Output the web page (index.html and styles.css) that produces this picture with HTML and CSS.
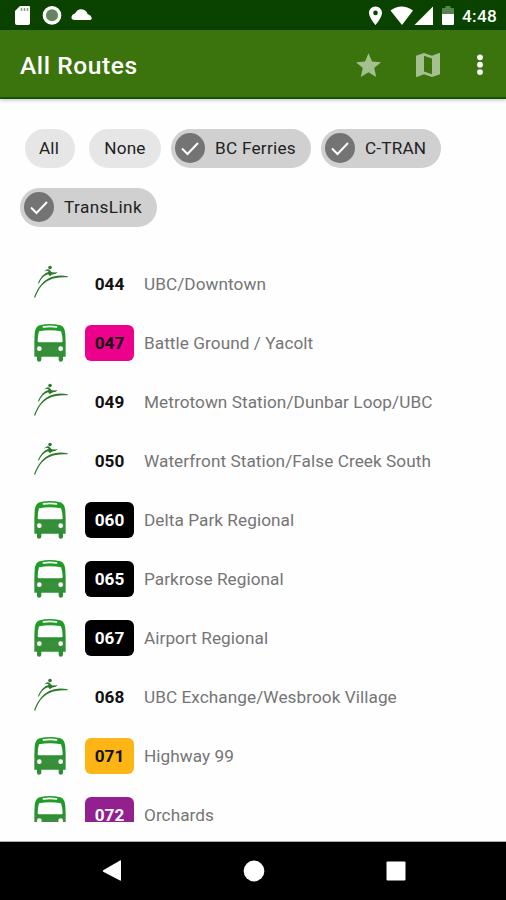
FILE: index.html
```html
<!DOCTYPE html>
<html lang="en">
<head>
<meta charset="utf-8">
<title>All Routes</title>
<link rel="stylesheet" href="styles.css">
</head>
<body>
<svg class="sprite" aria-hidden="true">
  <defs>
    <linearGradient id="green" x1="0" y1="0" x2="0" y2="1"><stop offset="0" stop-color="#20a126"/><stop offset=".4" stop-color="#239329"/><stop offset=".65" stop-color="#3b8e3d"/><stop offset="1" stop-color="#299030"/></linearGradient>
    <symbol id="bus" viewBox="0 0 96 114">
      <path fill="url(#green)" fill-rule="evenodd" d="M2 30C3 18 6 8 17 4Q48-4 79 4C90 8 93 18 94 30L95 55V98H87V107Q87 113 80 113Q74 113 74 107V98H22V107Q22 113 15 113Q9 113 9 107V98H1V55ZM15 22Q11 36 11 51Q11 55 15 55H82Q86 55 86 51Q86 36 81 22Q48 16 15 22ZM29 6Q25 7 26 10Q27 12 30 11Q48 8 67 11Q70 12 70 9Q70 7 67 6Q48 3 29 6Z"/>
      <circle cx="16" cy="74" r="7" fill="#fff"/><circle cx="80" cy="74" r="7" fill="#fff"/>
    </symbol>
    <symbol id="runner" viewBox="0 0 104 100">
      <g fill="#2d792c">
        <path d="M0 99C8 75 24 50 45 40C63 31 83 30 103 34V37C80 36 62 38 46 46C25 56 13 74 4 99Z"/>
        <path d="M12 56C19 37 31 24 45 20C40 15 35 17 31 21C37 11 45 11 50 17Q54 24 61 22Q66 23 72 21Q68 28 59 28Q53 30 49 34L43 28C31 32 21 42 15 56Z"/>
        <circle cx="49" cy="7" r="5.500"/>
      </g>
    </symbol>
    <symbol id="check" viewBox="0 0 30 30"><circle cx="15" cy="15" r="15" fill="#747474"/><path d="M7 15.5L12.5 21L23 10" fill="none" stroke="#fff" stroke-width="2"/></symbol>
  </defs>
</svg>
<div class="screen">
  <div class="status">
    <svg class="status-icons" width="80" height="30" viewBox="0 0 80 30">
      <path fill="#fff" d="M6 6H15Q16 6 16 7V23Q16 25 14 25H3Q1 25 1 23V11Z"/>
      <path stroke="#8a9a88" stroke-width="1.5" d="M7.5 8V11M10.5 8V11M13.5 8V11"/>
      <circle cx="38" cy="15.3" r="7.7" fill="#638660" stroke="#fff" stroke-width="3.3"/>
      <path fill="#fff" d="M61 20Q57 20 57.5 17Q58 14 61 13.5Q64 8 69 9.5Q73 11 73.5 14Q77 15 77.7 18Q78 20 75 20Z"/>
    </svg>
    <svg class="status-icons" width="90" height="30" viewBox="0 0 90 30">
      <path fill="#fff" fill-rule="evenodd" d="M7.5 6.5C3.5 6.5 1 9.5 1 13C1 17.5 7.5 25 7.5 25S14 17.5 14 13C14 9.5 11.5 6.5 7.5 6.5ZM7.5 10.6A2.3 2.3 0 1 1 7.5 15.2A2.3 2.3 0 1 1 7.5 10.6Z"/>
      <path fill="#fff" d="M22.5 10.5Q33.500 2.500 45 10.500L34 25ZM46.500 25L65 6.500V25ZM74 14H86V24Q86 25 85 25H75Q74 25 74 24Z"/>
      <path fill="#578252" d="M74 14V9Q74 8 75 8H77.500V6H82.500V8H85Q86 8 86 9V14Z"/>
    </svg>
    <span class="clock">4:48</span>
  </div>
  <header class="appbar">
    <h1>All Routes</h1>
    <svg class="star" width="25" height="24" viewBox="2 2 20 19"><path fill="#a5c090" d="M12 17.270L18.180 21l-1.640-7.030L22 9.240l-7.190-.610L12 2 9.190 8.630 2 9.240l5.460 4.730L5.820 21z"/></svg>
    <svg class="map" width="24" height="24" viewBox="3 3 18 18"><path fill="#a5c090" d="M20.500 3l-.160.030L15 5.100 9 3 3.360 4.900c-.210.070-.360.250-.360.480V20.500c0 .280.220.500.500.500l.160-.030L9 18.900l6 2.100 5.640-1.900c.210-.070.360-.250.360-.480V3.500c0-.280-.220-.500-.500-.500zM15 19l-6-2.110V5l6 2.110V19z"/></svg>
    <svg class="more" width="8" height="24" viewBox="0 0 8 24"><g fill="#fff"><circle cx="4" cy="4.300" r="2.900"/><circle cx="4" cy="11.700" r="2.900"/><circle cx="4" cy="19.100" r="2.900"/></g></svg>
  </header>
  <main class="content">
    <div class="chips">
      <div class="chip-row">
        <span class="chip all">All</span><span class="chip none">None</span>
        <span class="chip on bc"><svg><use href="#check"/></svg>BC Ferries</span>
        <span class="chip on ctran"><svg><use href="#check"/></svg>C-TRAN</span>
      </div>
      <div class="chip-row">
        <span class="chip on translink"><svg><use href="#check"/></svg>TransLink</span>
      </div>
    </div>
    <ul class="routes">
      <li><svg class="runner"><use href="#runner"/></svg><b>044</b><span>UBC/Downtown</span></li>
      <li><svg class="bus"><use href="#bus"/></svg><b class="pink">047</b><span>Battle Ground / Yacolt</span></li>
      <li><svg class="runner"><use href="#runner"/></svg><b>049</b><span>Metrotown Station/Dunbar Loop/UBC</span></li>
      <li><svg class="runner"><use href="#runner"/></svg><b>050</b><span>Waterfront Station/False Creek South</span></li>
      <li><svg class="bus"><use href="#bus"/></svg><b class="black">060</b><span>Delta Park Regional</span></li>
      <li><svg class="bus"><use href="#bus"/></svg><b class="black">065</b><span>Parkrose Regional</span></li>
      <li><svg class="bus"><use href="#bus"/></svg><b class="black">067</b><span>Airport Regional</span></li>
      <li><svg class="runner"><use href="#runner"/></svg><b>068</b><span>UBC Exchange/Wesbrook Village</span></li>
      <li><svg class="bus"><use href="#bus"/></svg><b class="amber">071</b><span>Highway 99</span></li>
      <li><svg class="bus"><use href="#bus"/></svg><b class="purple">072</b><span>Orchards</span></li>
    </ul>
  </main>
  <nav class="navbar">
    <svg width="22" height="22" viewBox="0 0 22 22"><path fill="#fff" d="M2.200 10.200L19 .500Q20 0 20 1V20Q20 21 19 20.500L2.200 11.800Q1.300 11 2.200 10.200Z"/></svg>
    <svg width="22" height="22" viewBox="0 0 22 22"><circle cx="11" cy="11" r="10.400" fill="#fff"/></svg>
    <svg width="22" height="22" viewBox="0 0 22 22"><rect x="1.500" y="1.500" width="19" height="19" rx="1" fill="#fff"/></svg>
  </nav>
</div>
</body>
</html>
```
FILE: styles.css
```css
* { box-sizing: border-box; }
body { margin: 0; font-family: Roboto, "Liberation Sans", sans-serif; background: #fff; }
svg { display: block; flex: none; }
.sprite { position: absolute; width: 0; height: 0; }
.screen { width: 506px; height: 900px; display: flex; flex-direction: column; overflow: hidden; }
.status { height: 30px; flex: none; background: #0a4300; display: flex; align-items: center; justify-content: space-between; padding: 0 8px 0 14px; }
.status-icons + .status-icons { margin-left: auto; margin-right: 4px; }
.clock { color: #fff; font-size: 17.2px; font-weight: 500; line-height: 30px; padding-top: 2px; width: 36px; letter-spacing: .3px; white-space: nowrap; }
.appbar { height: 69px; flex: none; background: #3b730c; border-bottom: 2px solid #145405; box-shadow: 0 1px 4px #0004; display: flex; align-items: center; padding: 2px 22px 0 20px; z-index: 1; }
h1 { margin: 0 auto 0 0; padding-top: 2px; color: #fff; font-size: 24.6px; font-weight: 500; line-height: 30px; letter-spacing: .55px; }
.map { margin-left: 35px; }
.more { margin-left: 36px; }
.content { height: 743px; flex: none; background: #fefefe; border-bottom: 1px solid #aaa; }
.chips { padding: 29.5px 0 0 20px; height: 155px; }
.chip-row { display: flex; height: 59px; align-items: flex-start; }
.chip { height: 39px; border-radius: 20px; background: #e6e6e6; color: #222; font-size: 17.2px; line-height: 40px; letter-spacing: .15px; display: flex; align-items: center; justify-content: center; white-space: nowrap; }
.chip svg { width: 30px; height: 30px; margin-right: 10px; }
.on { background: #d0d0d0; justify-content: flex-start; padding-left: 4px; }
.all { width: 50px; margin-left: 5px; padding-right: 2px; }
.none { width: 72px; margin-left: 14px; }
.bc { width: 140px; margin-left: 10px; letter-spacing: .25px; }
.ctran { width: 120px; margin-left: 10px; }
.translink { width: 137px; letter-spacing: .4px; }
.routes { list-style: none; margin: 0; padding: 0 0 0 34px; height: 568px; overflow: hidden; }
.routes li { display: flex; height: 59.08px; align-items: center; }
.bus { width: 32px; height: 38px; margin-right: 19px; }
.runner { width: 34px; height: 33px; margin-left: -.5px; margin-right: 17.5px; margin-top: -5px; }
.routes b { width: 49px; height: 36px; border-radius: 6px; margin-right: 10px; text-align: center; font-size: 17.2px; line-height: 37px; color: #111; }
.routes span { font-size: 17.2px; letter-spacing: .06px; color: #757575; white-space: nowrap; }
.routes .pink { background: #ec008c; }
.routes .black { background: #000; color: #fff; }
.routes .amber { background: #fdb515; }
.routes .purple { background: #92208f; color: #fff; }
.navbar { height: 58px; flex: none; background: #000; display: flex; align-items: center; justify-content: space-between; padding: 0 99px 0 101px; }
```
